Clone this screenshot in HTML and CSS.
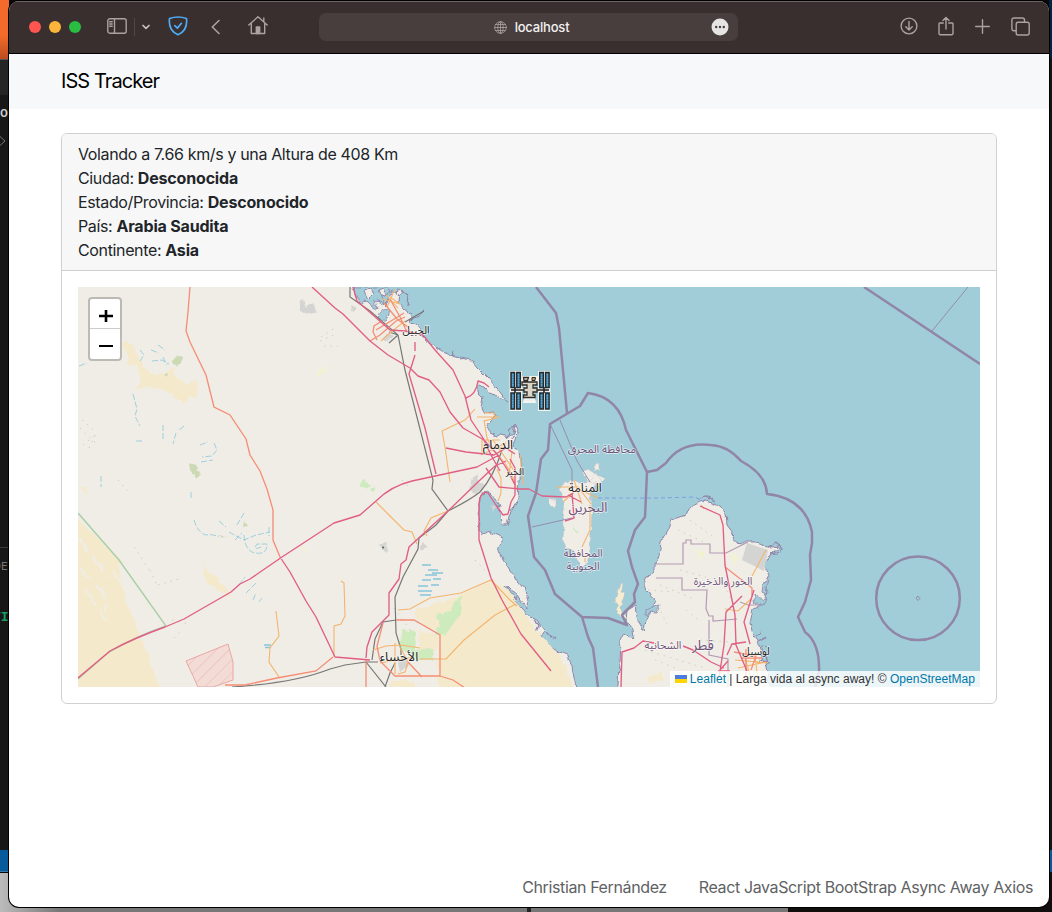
FILE: index.html
```
<!DOCTYPE html>
<html lang="es">
<head>
<meta charset="utf-8">
<title>ISS Tracker</title>
<link rel="stylesheet" href="styles.css">
</head>
<body>
<div class="desktop">
  <div class="behind-left">
    <div class="wallpaper"></div>
    <div class="editor-tabs"></div>
    <div class="editor-side"><span class="bit bit-title">o</span><svg class="bit bit-chev" width="6" height="12" viewBox="0 0 6 12"><path d="M0 1.500 5 6 0 10.500"/></svg><i class="bit bit-line"></i><span class="bit bit-de">DE</span><span class="bit bit-ti">TI</span></div>
    <div class="status"></div>
  </div>
  <div class="behind-right"><div class="status-right"></div></div>
  <div class="behind-bottom"><i class="seg-a"></i><i class="seg-b"></i><i class="seg-c"></i></div>

  <div class="window">
    <header class="titlebar">
      <div class="tools-left">
        <i class="dot red"></i><i class="dot yellow"></i><i class="dot green"></i>
        <svg class="ic sidebar" width="20" height="16" viewBox="0 0 20 16"><rect x=".8" y=".8" width="18.400" height="14.400" rx="2"/><path d="M7.500 1v14M2.700 3.700h2.500M2.700 6h2.500M2.700 8.300h2.500"/></svg>
        <i class="divider"></i>
        <svg class="ic caret" width="8" height="6" viewBox="0 0 8 6"><path d="M1 1.500 4 4.300 7 1.500"/></svg>
        <svg class="ic shield" width="20" height="20" viewBox="0 0 20 20"><path d="M10 1C7 1 4 1.600 1.500 2.500.7 9.500 3 15.800 10 18.700 17 15.800 19.300 9.500 18.500 2.500 16 1.600 13 1 10 1Z"/><path d="M6.800 9.700 9.400 12.100 13.400 7.300"/></svg>
        <svg class="ic back" width="9" height="16" viewBox="0 0 9 16"><path d="M8 1.500 1.300 8 8 14.500"/></svg>
        <svg class="ic home" width="20" height="20" viewBox="0 0 20 20"><path d="M.8 10 10 1.800 19.200 10M15.800 6.500V3M3.300 8.500V18.500H16.700V8.500"/><path class="door" d="M8.300 12h3.400v6.500H8.300Z"/></svg>
      </div>
      <div class="address">
        <svg class="ic globe" width="13" height="13" viewBox="0 0 13 13"><circle cx="6.500" cy="6.500" r="5.800"/><ellipse cx="6.500" cy="6.500" rx="2.700" ry="5.800"/><path d="M.7 6.500h11.600M6.500.7v11.600M1.600 3.500h9.800M1.600 9.500h9.800"/></svg>
        <span>localhost</span>
        <svg class="more" width="18" height="18" viewBox="0 0 18 18"><circle cx="9" cy="9" r="8.500"/><g><circle cx="5.200" cy="9" r="1.200"/><circle cx="9" cy="9" r="1.200"/><circle cx="12.800" cy="9" r="1.200"/></g></svg>
      </div>
      <div class="tools-right">
        <svg class="ic" width="18" height="18" viewBox="0 0 18 18"><circle cx="9" cy="9" r="7.900"/><path d="M9 4.500v8.300M5.800 9.700 9 12.900l3.200-3.200"/></svg>
        <svg class="ic" width="16" height="20" viewBox="0 0 16 20"><path d="M5.300 7H1.800Q1 7 1 7.800V17.600Q1 18.700 2 18.700H14Q15 18.700 15 17.600V7.800Q15 7 14.200 7H10.700M8 13V1.700M4.900 4.500 8 1.400l3.100 3.100"/></svg>
        <svg class="ic" width="15" height="15" viewBox="0 0 15 15"><path d="M7.500.7v13.600M.7 7.500h13.600"/></svg>
        <svg class="ic" width="19" height="19" viewBox="0 0 19 19"><rect x="5.200" y="5.200" width="13" height="12.800" rx="2"/><path d="M5 13.700H3Q.9 13.700.9 11.500V3Q.9 1 3 1h8.300Q13.500 1 13.500 3v2"/></svg>
      </div>
    </header>

    <nav class="navbar"><a class="brand">ISS Tracker</a></nav>

    <main class="container">
      <section class="card">
        <div class="card-header">
          <div class="speed">Volando a 7.66 km/s y una Altura de 408 Km</div>
          <div>Ciudad: <b>Desconocida</b></div>
          <div>Estado/Provincia: <b>Desconocido</b></div>
          <div>País: <b>Arabia Saudita</b></div>
          <div>Continente: <b>Asia</b></div>
        </div>
        <div class="card-body">
          <div class="map">
            <svg class="tiles" width="902" height="400" viewBox="78 287 902 400">
              <defs>
                <pattern id="military" width="9" height="9" patternUnits="userSpaceOnUse" patternTransform="rotate(45)"><rect width="9" height="9" fill="#f2dcd5"/><path d="M0 0V9" stroke="#ebb5b1" stroke-width="1"/></pattern>
                <filter id="rough" x="-2%" y="-2%" width="104%" height="104%" color-interpolation-filters="sRGB"><feTurbulence type="fractalNoise" baseFrequency=".13" numOctaves="2" seed="4" result="n"/><feDisplacementMap in="SourceGraphic" in2="n" scale="6" xChannelSelector="R" yChannelSelector="G"/></filter>
              </defs>
              <rect class="sea" x="78" y="287" width="902" height="400"/>
              <g filter="url(#rough)">
              <!-- mainland -->
              <path class="land" d="M60 270H353V287L358 297 368 304 376 299 381 306 387 302 392 291 400 292 399 303 405 310 412 315 410 322 420 328 424 338 432 345 443 352 455 357 471 360 478 368 487 377 497 388 508 403 497 395 488 394 484 388 478 385 478 391 483 396 481 408 484 413 493 411 496 417 490 421 486 426 490 434 497 437 503 433 507 438 513 433 515 425 518 429 515 440 512 447 520 450 521 460 519 480 518 500 509 515 507 525 502 525 501 513 498 505 492 495 485 491 481 497 478 508 479 530 482 535 490 532 501 536 502 540 498 550 503 560 510 570 518 582 525 590 528 609 522 602 517 594 506 586 505 588 515 600 530 617 537 620 545 632 540 638 553 648 560 652 568 655 572 668 576 687V700H60Z"/>
              <path class="water inlet" d="M354 287H387L390 292 382 296 384 304 375 300 377 309 370 305 365 300 362 305 356 296ZM379 313q6-6 11-2-2 9-8 10-5-1-3-8Z"/>
              <path class="land isle" d="M364 291 371 289 374 293 368 299ZM378 291l5-2 3 5-5 3ZM398 288l6 3-3 6-4-2Z"/>
              <!-- Bahrain -->
              <path class="land plain" d="M560 488 570 480 586 483 597 474 600 482 591 492 592 510 591 530 590 550 585 566 580 567 575 553 566 548 562 538 565 510ZM549 498l7 2v8l-6-2ZM583 472l6-2 9 5 8 4-7 6-12-4ZM594 466l4-2 2 7-5-1Z"/>
              <path class="land plain sandbank" d="M620 584l3-1-2 9 5 2-4 7-1 8 5 8-4 1-5-7 2-6-4-5 3-10Z"/>
              <!-- Qatar -->
              <path class="land" d="M618 700V687L620 640 624 632 631 637 635 641 633 630 626 621 627 610 635 606 637 617 640 625 644 632 646 620 652 610 656 600 647 592 644 584 647 576 654 571 654 564 659 556 661 542 668 530 672 520 686 515 689 508 700 502 706 500 716 504 726 512 727 525 733 533 735 542 745 543 757 543 768 547 780 546 770 555 765 565 769 576 764 584 768 592 763 604 753 609 750 622 753 635 758 641 761 652 766 667 770 687V700Z"/>
              <path class="water" d="M646 610l8-4 5-1-4 8-6-1-3 4ZM763 584l6-3-3 6 2 7-6-2ZM753 594l8 5 6-1-4 7-8-1Z"/>
              <path class="coast thin" d="M401 290l7 5-1 10M410 320l14-9M452 356l2-6M462 359l-5-2M390 298l-4 8M507 438l4-10 5-1-4 12M533 633l-2 8 8 4M534 620l5 5-3 7 9 9M547 633l5 5 4-2M698 499l8-3 8 5M768 547l8-5 6 7-12 6 8-1M758 642l9-5M764 653l4 4-3 6M766 665l5-2M550 648l6 4M507 588l9 12 2-5M756 636l5-4M761 646l6 1M760 660l8 3"/>
              <!-- sand and ground cover -->
              <g class="sand">
                <path d="M121 347l7-7 9 14 6 12 6 6 16 3 9-8 2 10 13 8-2 20-14-9-13-8-20-1-6 4 9-10-8-18-7 3 1-8ZM188 383l9-3 1 18-12-1Z"/>
                <path d="M60 500 78 520 123 562 118 563 126 600 160 687V700H60ZM203 560l4 10 12 9 13 18-13-6-14-9ZM78 487l8 2 3 9-6-8Z"/>
                <path d="M415 610 447 600 493 580 510 592 536 630 560 655 573 687V700H440L438 668V632L415 618ZM419 630l19 5-2 15-16-1ZM390 680l25 2-1 5h-25ZM648 676l14-4 3 8-16 3Z"/>
              </g>
              <path class="groundline" d="M78 537l30 40M78 568l24 22 4 20M85 590l22 30M112 570l18 28"/>
              <g class="green"><path d="M174 357l8-1-1 6-4 5-4-6ZM190 463l7 2-1 5 5 5-5 2-8-9ZM163 376l5-2-1 4ZM244 521l3 5-4 1ZM219 535l9 1-6 2Z"/><path class="bright" d="M359 485l5-4 6 4-5 4ZM370 488l4-2 2 3-4 2ZM436 615l14-4 5-10 6-5 1 12-4 12-8 6-5 9-9-1-1-6 5-3ZM399 643l5-13 11 2 1 18 16-2 2 12-16 0-15-11ZM573 527l5 5-2 2Z"/></g>
              <path class="yellowish" d="M315 374l13-9-3 9-9 3ZM303 547l4 3 2 3-6-4ZM695 548l9 5-4 7ZM730 552l8 6-4 8Z"/>
              <g class="gray"><path d="M298 302l5-2 3 7 7-4 4 9-7 3-9-6ZM351 305l7 3-5 4ZM383 338l6-6 5 4-7 6ZM378 545l8-2 2 8-7-1ZM473 477l6-3v8l6 3-8 9-7-5ZM419 546l4-3 6 5-6 2ZM398 661l9-2 1 7-8 7ZM491 505l5 2-2 6Z"/></g>
              </g>
              <path class="basin" d="M747 543 768 550 764 571 742 560Z"/>
              <circle cx="383" cy="547.500" r="1" fill="#555"/>
              <path class="military" d="M186 661 228 644 233 662 233 680 213 687H198L193 676Z"/>
              <path class="wadi" d="M79 366l8-3M140 350l4 5-4 6M151 350l8 3M158 345l7 5M152 361l10-1 7 4M163 357l4 8M133 394l4 15-2 7 5 10M163 425v14M176 433l-3 11M184 426l-5 4M136 441h8M200 445l8-3M214 443l3 7-5 6-10 1M201 462l12-2M101 476v11M191 492v7M194 520q4 13 12 15 8-1 13 2M219 521l7 6M229 532l15 8 12-5 14-3M235 540l7-7M244 535q1 17 12 18 11 2 11-9h-10q-5 7 4 3M244 513l-7 12M269 527v9M239 585l6-8M246 593l10-10M253 600l3-7M262 598l-3 4"/>
              <path class="wetland" d="M422 565h9M428 570h10M425 575h12M432 573h11M422 580h9M433 579h8M418 586h10M431 585h8M418 591h14M420 595h11M264 645h7M265 647.500h5"/>
              <path class="speckle" d="M321 337l14-9M320 341l18-8M324 346h14M82 420l14 12M80 428l18 17M83 445l12-10M89 448l8-16M134 547l16 24M150 570l8 18M158 585l24-7M172 620l16 4M174 638l7-7M648 590l26 2M655 600l12 24M680 570l26 7M724 585l10 20M686 610l15 12M700 640l30 2M645 650l60 18M394 608l22 30M402 480l8 8M475 560l10 10M118 480l12 14M678 530l30 14M690 520l22 16M660 585l34 14M655 660l20 8"/>
              <!-- administrative lines -->
              <path class="admin" d="M654 564H683V543H686V540H691V544H710V553H726L748 542M656 578H682V590H707L706 609 709 616H713V621L737 619M709 620V655L728 659V687M740 602l8 3h12"/>
              <path class="park" d="M78 513 119 560 166 626Q137 636 109 652L78 679"/>
              <!-- railways -->
              <path class="rail" d="M350 287V297L370 311 398 335 405 370 433 480 432 489 448 511Q470 500 480 492 494 476 502 450M448 511 436 525 419 538 418 549 403 577 395 597 396 633 401 649 401 655M398 335 389 343M398 335 389 332M405 322 424 311M232 687Q295 683 330 669L345 665 366 662 378 662M366 662 386 687M372 660 375 639 383 622 396 620M385 687l5-14 5-10"/>
              <!-- secondary roads -->
              <path class="minor" d="M276 611 279 636 270 648 269 662 279 677M341 581l3 2 1 33-4 8-7 2V657M376 502 390 516 404 530 412 532 417 544M448 511 431 518 424 531 427 536M398 610l12-1 20-11 31-5 30-13 19 20 7 6M420 659H446L464 640 495 615 516 604M442 431l3 16 5 35M442 431 465 420 475 409M477 417 500 417M484 420 487 438 493 450 505 463 512 475 517 490M484 448h25M493 440l24 35M481 455l25-12M482 455v-15h18M497 469l4 9v15l-3 8M382 299l18 5-10-7M386 295l12 13M395 289l-8 18M381 341l10-9 14-11M590 505v25l-8 17M585 562V555M556 487h22l13 17M563 502l15-13 20 9M574 480l8 24M701 505l3 4M766 550l-14 26M725 609l13 2 14-13M373 650l13-4 15-1 19 3M395 643v31M380 663l34-6M400 647l8 15-3 10-7 2M520 455l3 30M512 451l-3 25M735 660l33 3M738 668l28-6M745 658l7 24M755 656l3 24M484 413h10l2 5-12 3"/>
              <!-- primary roads -->
              <path class="primary" d="M190 287 188 312 186 331 190 342 206 375 214 407 230 415 246 439 250 455 260 471 267 489 273 510 273 540 280 557M333 657 316 671 277 678 245 685H225M366 660v27M396 620h18l26 15V676H395L380 661 377 646 383 623M440 676l13 4 12 8M408 662l14 15M370 341l10-6 16-14 9-4M382 321l-8 5-1 6 4 8M390 299l10 18 7 15M404 313l-8 5-20 12M384 303l13 16 11 8M725 567l27 21v8M734 652l22 4-5 14M746 649v28M742 658h20"/>
              <!-- motorways -->
              <path class="motor" d="M312 287 335 308 343 314 370 341 388 355 410 368 418 376 429 380 440 392 450 412 463 428 484 440 497 454 507 469 515 485M353 287 357 301 390 330 405 331 423 335 435 350 453 370 465 396 471 420 483 438 491 455 500 471M415 342v9M415 355l-6 19 16 54 11 46M446 448l20 4 28 3 12-7 9 6M466 398q10-3 12-17l6 2 5 4M78 678 110 651Q134 638 165 627L184 619 231 592 240 584 250 579 282 557 334 523 360 515 376 501Q391 486 412 481L477 467 499 455M448 511 409 547 406 560 401 564 399 579 389 593V615L372 632 367 647 366 658M448 511 479 481 495 466 506 461M370 660 335 657 316 617 306 601 290 572 280 557M486 468 499 487 519 489 529 489 542 496 566 497 573 493M479 503 479 540 491 578 502 600 521 634 551 671M479 503q2-13 9-10l8 12 7 10 5-1 3-12 4-7v-27l-5-9M572 493l2 25-9 3M568 495l13 7M621 687 622 652 634 648 643 641 654 643M700 506 720 515 723 525 725 565 735 615 736 645 747 671M742 596 726 612 724 645 719 678M754 590 744 622 750 644M746 642l-14 2-5 11M683 646 693 650 711 662 724 668M718 671h12M720 670l8-9"/>
              <!-- maritime boundaries -->
              <path class="border" d="M536 287 556 313 559 328 567 413M647 472 626 430 Q619 397 588 393L580 406 550 424 548 450 541 459 536 493 528 516 534 557 545 570 555 594 582 617 588 637 593 648 598 687M582 617 608 618 627 625 622 615 635 602 634 594 638 584 632 567 628 551 635 530 645 517 647 472 657 470 666 463Q681 441 711 445 728 446 741 461 766 474 767 494 805 498 812 532L812 543 810 555 811 580 805 602 798 617 805 632Q820 643 819 672L815 687M864 287 980 364"/>
              <circle class="border ring" cx="918" cy="598.300" r="41.800"/>
              <path class="border fine" d="M550 424 572 470V489M560 420 577 461 590 482M532 527 572 518M932 331 968 287M916 598l2-2 2 2.500-2 2Z"/>
              <path class="ferry" d="M598 498h59l38-1 9 5"/>
              <g class="labels">
                <text x="416" y="334" font-size="10.500">الجبيل</text><text x="498" y="449" font-size="13">الدمام</text><text x="515" y="475" font-size="9.800">الخبر</text><text x="585" y="492" font-size="12.300">المنامة</text><text x="399" y="661" font-size="13">الأحساء</text><text x="756" y="655" font-size="10.500">لوسيل</text>
                <g class="region"><text x="602" y="453" font-size="11">محافظة المحرق</text><text x="588" y="512" font-size="13.500">البحرين</text><text x="583" y="557" font-size="10.700">المحافظة</text><text x="583" y="570" font-size="10.700">الجنوبية</text><text x="723" y="585" font-size="10.800">الخور والذخيرة</text><text x="703" y="650" font-size="14">قطر</text><text x="663" y="649" font-size="10.800">الشحانية</text></g>
              </g>
              <!-- station marker -->
              <g class="station">
                <path class="halo" d="M510.500 372h10.500v38h-10.500ZM539 372h10.500v38H539ZM522 389h16M523 377h14v6l-4 3v11l2 5h-11l2-5v-10l-3-3Z"/>
                <path class="truss" d="M511 390h38M515 393v-6M544 393v-6"/>
                <path class="panel" d="M511 372.500h3.500v15H511ZM516.800 372.500h3.500v15h-3.500ZM511 393h3.500v16H511ZM516.800 393h3.500v16h-3.500ZM539.800 372.500h3.500v15h-3.500ZM545.600 372.500h3.500v15h-3.500ZM539.800 393h3.500v16h-3.500ZM545.600 393h3.500v16h-3.500Z"/>
                <path class="cells" d="M512.800 374v13M518.500 374v13M512.800 395v13M518.500 395v13M541.500 374v13M547.400 374v13M541.500 395v13M547.400 395v13"/>
                <path class="module" d="M522 382h15v3h-4v3h4v4h-4v3h2v2.500h-11.500V395h3.500v-3h-3v-4h3v-3h-5ZM523.500 377.500h5l-1 3h-3.500Z"/><path class="gold" d="M532 377.500h3.500l-.5 3h-3Z"/>
              </g>
            </svg>
            <div class="zoom"><a><svg width="14" height="14" viewBox="0 0 14 14"><path d="M0 7h14M7 1v12"/></svg></a><a><svg width="14" height="14" viewBox="0 0 14 14"><path class="minus" d="M0 7h14"/></svg></a></div>
            <div class="attribution"><svg width="12" height="8" viewBox="0 0 12 8"><path fill="#4c7be1" d="M0 0h12v4H0z"/><path fill="#ffd500" d="M0 4h12v4H0z"/></svg><span><a>Leaflet</a> | Larga vida al async away! © <a>OpenStreetMap</a></span></div>
          </div>
        </div>
      </section>
    </main>
    <footer class="footer"><span>Christian Fernández</span><span>React JavaScript BootStrap Async Away Axios</span></footer>
  </div>
</div>
</body>
</html>
```
FILE: styles.css
```
* { box-sizing: border-box; }
body { margin: 0; font-family: Inter, "Liberation Sans", sans-serif; font-size: 16px; line-height: 24px; color: #212529; }
.desktop { position: relative; width: 1052px; height: 912px; overflow: hidden; background: #080808; padding: 1px 3px 4px 9px; }
.behind-left { position: absolute; left: 0; top: 0; width: 9px; height: 872px; display: flex; flex-direction: column; }
.wallpaper { height: 59px; background: linear-gradient(#f4692c, #f26b29 60%, #bd4c20); }
.editor-tabs { height: 36px; background: #252525; border-top: 1px solid #555; }
.editor-side { position: relative; flex: 1; background: #171717; overflow: hidden; }
.status { height: 22px; background: #075a9b; border-bottom: 1px solid #3779a8; }
.bit { position: absolute; left: 0; font-size: 13px; line-height: 16px; color: #ccc; }
.bit-title { top: 9px; font-weight: 600; }
.bit-chev { top: 40px; fill: none; stroke: #777; }
.bit-line { top: 452px; width: 9px; height: 1px; background: #3a3a3a; }
.bit-de { top: 463px; left: -7px; font-size: 11px; color: #777; }
.bit-ti { top: 515px; left: -7px; font: bold 13px/16px "Liberation Mono", monospace; color: #179b62; }
.behind-right { position: absolute; right: 0; top: 0; width: 3px; height: 912px; background: linear-gradient(#062440 0 58px, #151515 58px); }
.status-right { height: 22px; margin-top: 850px; background: #075a9b; }
.behind-bottom { position: absolute; left: 0; top: 873px; width: 1052px; height: 39px; display: flex; background: linear-gradient(90deg, #bbb 0, #777 60px, #777); }
.seg-a { flex: none; margin-left: 527px; width: 4px; background: #252525; }
.seg-a { margin-left: 527px; }
.seg-b { flex: none; width: 257px; background: #777; }
.seg-c { flex: 1; background: #110e0d; }
.window { position: relative; width: 1040px; height: 906px; display: flex; flex-direction: column; background: #fff; border-radius: 10px; overflow: hidden; box-shadow: 0 0 0 1px #000; }
.titlebar { height: 53px; flex: none; display: flex; background: #392f2e; border-bottom: 1px solid #000; box-shadow: inset 0 1px #6d6563; }
.tools-left { width: 310px; display: flex; align-items: center; padding: 0 0 1px 20px; }
.dot { width: 12px; height: 12px; border-radius: 50%; margin-right: 8px; }
.red { background: #ff5550; } .yellow { background: #fdb43a; } .green { background: #29bd42; }
.ic { flex: none; fill: none; stroke: #aaa3a2; stroke-width: 1.4; stroke-linecap: round; stroke-linejoin: round; }
.sidebar { margin-left: 18px; margin-top: -1px; }
.divider { width: 1px; height: 18px; background: #514746; margin-left: 7px; }
.caret { margin-left: 7px; stroke-width: 1.700; stroke: #c9c3c2; }
.shield { margin-left: 18px; margin-top: -1px; stroke: #4eaaf5; stroke-width: 1.700; }
.back { margin-left: 23px; stroke-width: 1.600; }
.home { margin-left: 28px; margin-top: -3px; }
.door { fill: #aaa3a2; }
.address { position: relative; width: 419px; height: 28px; margin-top: 12px; border-radius: 7px; background: #483e3d; color: #f3f1f1; display: flex; align-items: center; justify-content: center; gap: 8px; font-size: 13px; font-weight: 500; letter-spacing: -.2px; padding-left: 6px; }
.globe { stroke-width: .8; }
.more { position: absolute; right: 9px; top: 5px; fill: #e7e4e4; }
.more g { fill: #483e3d; }
.tools-right { flex: 1; display: flex; align-items: center; justify-content: flex-end; gap: 21px; padding: 0 19px 2px 0; }
.tools-right .ic:first-child { margin-right: -1px; }
.navbar { height: 55px; flex: none; background: #f7f8fa; padding: 12px 52px; }
.brand { color: #000; font-size: 20px; line-height: 30px; letter-spacing: -.93px; }
.container { padding: 24px 52px; flex: 1; }
.card { border: 1px solid #d0d0d0; border-radius: 6px; overflow: hidden; background: #fff; }
.card-header { height: 137px; padding: 8px 16px; background: #f7f7f7; border-bottom: 1px solid #cfcfcf; letter-spacing: -.36px; }
.card-header b { font-weight: 650; letter-spacing: -.18px; }
.card-body { padding: 16px; }
.map { position: relative; height: 400px; overflow: hidden; }
.tiles { display: block; }
.sea, .water { fill: #a1cdd9; }
.water { stroke: #9187ab; stroke-width: .8; }
.land { fill: #f0ede6; stroke: #8f86aa; stroke-width: 1; stroke-linejoin: round; }
.land.plain { stroke-width: .4; stroke: #c0b9bf; }
.land.sandbank { fill: #f5ecd2; }
.coast { fill: none; stroke: #8f86aa; stroke-width: 1.200; }
.sand { fill: #f5e9cc; }
.groundline { fill: none; stroke: #f0ede6; stroke-width: 2.500; stroke-dasharray: 18 6; }
.green { fill: #cbdab4; } .bright { fill: #ceebbd; }
.yellowish { fill: #f2f2d3; } .gray, .basin { fill: #d4d4d2; }
.military { fill: url(#military); stroke: #eba6a6; }
.wadi { fill: none; stroke: #94cddd; stroke-width: .9; stroke-dasharray: 6 2; }
.wetland { fill: none; stroke: #86c5dc; stroke-width: 1.400; }
.speckle { fill: none; stroke: #cdd2b9; stroke-width: 1; stroke-dasharray: 1.500 5; }
.admin { fill: none; stroke: #b49bb4; stroke-width: 1.200; }
.park { fill: none; stroke: #9fca9e; stroke-width: 1.500; opacity: .85; }
.rail { fill: none; stroke: #777; stroke-width: 1.200; }
.minor { fill: none; stroke: #f4b46d; stroke-width: 1.100; }
.primary { fill: none; stroke: #f58d74; stroke-width: 1.300; }
.motor { fill: none; stroke: #e15e84; stroke-width: 1.350; stroke-linejoin: round; }
.border { fill: none; stroke: #9186a6; stroke-width: 2.500; stroke-linejoin: round; }
.border.fine { stroke-width: .9; }
.ferry { fill: none; stroke: #7d9fe3; stroke-dasharray: 4 3; }
.labels { font-family: "Noto Sans Arabic", "DejaVu Sans", sans-serif; fill: #222; text-anchor: middle; stroke: #fff; stroke-opacity: .6; stroke-width: 1.500; }
.labels text { paint-order: stroke; }
.region { fill: #6f5378; }
.halo { fill: #eee; stroke: #f4f3ee; stroke-width: 2; }
.truss { fill: none; stroke: #222; stroke-width: 1.600; }
.panel { fill: #408bb7; stroke: #222b30; stroke-width: 1.500; }
.cells { fill: none; stroke: #5fa9d2; stroke-width: 1.500; stroke-dasharray: 1.500 1; }
.module { fill: #dad5c4; stroke: #302e2b; stroke-width: 1.300; } .gold { fill: #c59249; stroke: #302e2b; }
.zoom { position: absolute; left: 10px; top: 10px; width: 34px; border: 2px solid #bdbab6; border-radius: 4px; background: #fff; }
.zoom a { display: flex; align-items: center; justify-content: center; height: 30px; padding-left: 1px; }
.zoom a:first-child { border-bottom: 1px solid #ccc; padding-top: 5px; }
.zoom a:last-child { padding-top: 3px; }
.zoom path { stroke: #000; stroke-width: 2.600; } .zoom .minus { stroke-width: 2; }
.attribution { position: absolute; right: 0; bottom: 0; height: 16px; padding: 0 5px; display: flex; align-items: center; gap: 3px; background: rgba(255,255,255,.8); font: 12px/16px "Liberation Sans", sans-serif; color: #333; white-space: nowrap; letter-spacing: .02px; }
.attribution a { color: #0078a8; }
.footer { height: 40px; flex: none; display: flex; justify-content: flex-end; gap: 32px; padding: 8px 16px 0 0; color: #606264; letter-spacing: -.38px; }
```
